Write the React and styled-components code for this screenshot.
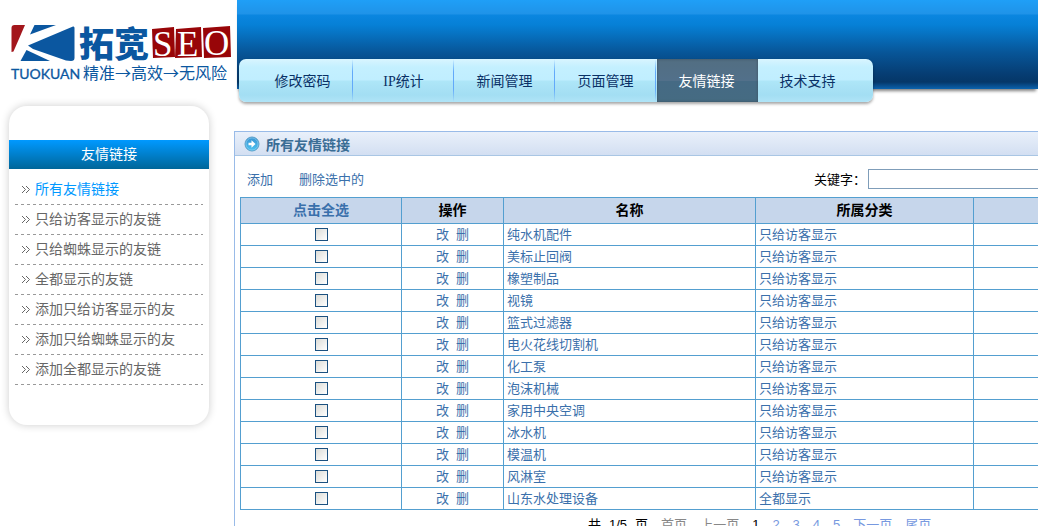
import React, { useState } from "react";
import styled, { createGlobalStyle, css } from "styled-components";

const navItems = ["修改密码", "IP统计", "新闻管理", "页面管理", "友情链接", "技术支持"];

const sideItems = [
  "所有友情链接",
  "只给访客显示的友链",
  "只给蜘蛛显示的友链",
  "全都显示的友链",
  "添加只给访客显示的友",
  "添加只给蜘蛛显示的友",
  "添加全都显示的友链",
];

const links = [
  { id: 1, name: "纯水机配件", type: "只给访客显示" },
  { id: 2, name: "美标止回阀", type: "只给访客显示" },
  { id: 3, name: "橡塑制品", type: "只给访客显示" },
  { id: 4, name: "视镜", type: "只给访客显示" },
  { id: 5, name: "篮式过滤器", type: "只给访客显示" },
  { id: 6, name: "电火花线切割机", type: "只给访客显示" },
  { id: 7, name: "化工泵", type: "只给访客显示" },
  { id: 8, name: "泡沫机械", type: "只给访客显示" },
  { id: 9, name: "家用中央空调", type: "只给访客显示" },
  { id: 10, name: "冰水机", type: "只给访客显示" },
  { id: 11, name: "模温机", type: "只给访客显示" },
  { id: 12, name: "风淋室", type: "只给访客显示" },
  { id: 13, name: "山东水处理设备", type: "全都显示" },
];

const Logo = () => (
  <LogoSvg viewBox="0 0 237 89" role="img" aria-label="拓宽SEO">
    <path d="M11.5 28 Q11.5 25 14.5 25 L25 25 L13.5 51.5 L11.5 52 Z" fill="#a3161c" />
    <path d="M34.5 25 H56 L45 29 L30 34.5 Z" fill="#0b57a0" />
    <path d="M28 45.5 L73 26.5 Q74.5 26 74.5 28 V58 Q74.5 61 71 61 L66 60.5 L33 49 Z" fill="#0b57a0" />
    <path d="M26.5 50 L50 61 H20.5 Z" fill="#0b57a0" />
    <text x="79" y="57" className="name">拓宽</text>
    <path d="M152 29 L174 27 L175 57 L153 58 Z" fill="#980508" />
    <path d="M176 29 L201 27 L202 57 L175 58 Z" fill="#980508" />
    <path d="M203 28 L230 26 L231 57 L204 58 Z" fill="#980508" />
    <text x="153" y="56" className="seo">S</text>
    <text x="177" y="56" className="seo">E</text>
    <text x="204" y="55" className="seo">O</text>
    <text x="11" y="79" className="latin">TUOKUAN</text>
    <text x="83" y="79" className="slogan">精准→高效→无风险</text>
  </LogoSvg>
);

const Chevrons = () => (
  <svg width="10" height="11" viewBox="0 0 10 11" fill="none" stroke="#666" aria-hidden="true">
    <path d="M1 1 L4.5 4.5 L1 8 M5 1 L8.5 4.5 L5 8" />
  </svg>
);

const ArrowBall = () => (
  <svg width="16" height="16" viewBox="0 0 16 16" aria-hidden="true">
    <defs>
      <linearGradient id="ball" x1="0" y1="0" x2="0" y2="1">
        <stop offset="0" stopColor="#3a92d2" />
        <stop offset="1" stopColor="#4cc4f2" />
      </linearGradient>
    </defs>
    <circle cx="8" cy="8" r="7" fill="url(#ball)" stroke="#5c9fc8" />
    <circle cx="8" cy="8" r="6" fill="none" stroke="#8fd0f0" strokeWidth="0.6" />
    <path d="M4.5 6.7 H7.5 V4.3 L11.5 8 L7.5 11.7 V9.3 H4.5 Z" fill="#fff" />
  </svg>
);

function App() {
  const [checked, setChecked] = useState([]);
  const [keyword, setKeyword] = useState("");

  const toggle = (id) => {
    setChecked(checked.includes(id) ? checked.filter((c) => c !== id) : [...checked, id]);
  };

  const toggleAll = (e) => {
    e.preventDefault();
    setChecked(checked.length === links.length ? [] : links.map((l) => l.id));
  };

  return (
    <Page>
      <GlobalStyle />
      <Header>
        <Logo />
        <Banner>
          <Nav>
            {navItems.map((item) => (
              <NavLink key={item} href="#" $active={item === "友情链接"}>
                {item}
              </NavLink>
            ))}
          </Nav>
        </Banner>
      </Header>
      <Body>
        <Sidebar>
          <SideTitle>友情链接</SideTitle>
          <SideList>
            {sideItems.map((item, i) => (
              <SideItem key={item}>
                <Chevrons />
                <SideLink href="#" $active={i === 0}>{item}</SideLink>
              </SideItem>
            ))}
          </SideList>
        </Sidebar>
        <Panel>
          <PanelTitle>
            <ArrowBall />
            所有友情链接
          </PanelTitle>
          <Toolbar>
            <a href="#">添加</a>
            <a href="#">删除选中的</a>
            <Search onSubmit={(e) => e.preventDefault()}>
              <label htmlFor="keyword">关键字：</label>
              <SearchInput id="keyword" type="text" value={keyword} onChange={(e) => setKeyword(e.target.value)} />
            </Search>
          </Toolbar>
          <Table>
            <colgroup>
              <col width="161" />
              <col width="102" />
              <col width="252" />
              <col width="218" />
              <col />
            </colgroup>
            <thead>
              <tr>
                <Th><a href="#" onClick={toggleAll}>点击全选</a></Th>
                <Th>操作</Th>
                <Th>名称</Th>
                <Th>所属分类</Th>
                <Th />
              </tr>
            </thead>
            <tbody>
              {links.map((link) => (
                <tr key={link.id}>
                  <Td $center>
                    <Checkbox
                      type="checkbox"
                      aria-label={link.name}
                      checked={checked.includes(link.id)}
                      onChange={() => toggle(link.id)}
                    />
                  </Td>
                  <Td $center>
                    <Actions>
                      <a href="#">改</a>
                      <a href="#">删</a>
                    </Actions>
                  </Td>
                  <Td><a href="#">{link.name}</a></Td>
                  <Td><a href="#">{link.type}</a></Td>
                  <Td />
                </tr>
              ))}
            </tbody>
          </Table>
          <Pager>
            <PageCount>
              <span>共</span>
              <span>1/5</span>
              <span>页</span>
            </PageCount>
            <Muted>首页</Muted>
            <Muted>上一页</Muted>
            <span>1</span>
            {["2", "3", "4", "5", "下一页", "尾页"].map((p) => (
              <a key={p} href="#">{p}</a>
            ))}
          </Pager>
        </Panel>
      </Body>
    </Page>
  );
}

const GlobalStyle = createGlobalStyle`
  * {
    box-sizing: border-box;
  }

  body {
    margin: 0;
    background: #fff;
    font: 13px "Liberation Serif", "Noto Sans CJK SC", sans-serif;
    color: #000;
  }

  a {
    color: #3a70ab;
    text-decoration: none;
  }
`;

const Page = styled.div`
  height: 100vh;
  overflow: hidden;
`;

const Header = styled.header`
  display: flex;
  height: 89px;
`;

const LogoSvg = styled.svg`
  flex: none;
  width: 237px;
  height: 89px;

  text {
    fill: #0b57a0;
    font-family: "Noto Sans CJK SC", sans-serif;
  }

  .name {
    font-size: 35px;
    font-weight: 900;
  }

  .seo {
    fill: #fff;
    font: 35px "Liberation Serif", serif;
  }

  .latin {
    font: 14px Lato, sans-serif;
    stroke: #0b57a0;
    stroke-width: 0.3px;
  }

  .slogan {
    font-size: 16px;
  }
`;

const Banner = styled.div`
  flex: 1;
  padding: 59px 0 0 2px;
  background: linear-gradient(
    #1f9ff7 0,
    #1f93e8 14px,
    #0a86e0 15px,
    #0680d6 25px,
    #075699 52px,
    #063d73 74px,
    #053768 82px,
    #0a5ca4 88px,
    #0b66b0 89px
  );
  box-shadow: 0 4px 3px -2px rgba(0, 0, 0, 0.5);
`;

const Nav = styled.nav`
  display: flex;
  width: fit-content;
  height: 43px;
  padding: 0 14px;
  border-radius: 7px;
  background: linear-gradient(#d9f5ff 0, #c4f0ff 8px, #c0eeff 21px, #aee6f8 22px, #a3def3 36px, #b0e4f7 43px);
  box-shadow: 0 2px 3px rgba(0, 0, 0, 0.35);
`;

const NavLink = styled.a`
  width: 101px;
  padding-right: 2px;
  color: #0a3166;
  font-size: 14px;
  line-height: 46px;
  text-align: center;
  background: linear-gradient(transparent, #62a9fa 30%, #62a9fa 70%, transparent) right 1px top / 1px 100% no-repeat;

  ${({ $active }) => $active && css`
    color: #fff;
    background: linear-gradient(#526e82, #52708a 50%, #456a84 51%, #456b82);
    box-shadow: inset 0 0 3px #3c4f5f;
  `}

  &:last-child {
    background: none;
  }
`;

const Body = styled.div`
  display: flex;
  align-items: flex-start;
`;

const Sidebar = styled.aside`
  flex: none;
  width: 200px;
  margin: 17px 25px 0 9px;
  padding: 34px 0 40px;
  border-radius: 18px;
  box-shadow: 0 0 8px rgba(0, 0, 0, 0.2);
`;

const SideTitle = styled.h2`
  margin: 0;
  color: #fff;
  font-size: 14px;
  font-weight: normal;
  line-height: 29px;
  text-align: center;
  background: linear-gradient(#0099ff, #006699);
`;

const SideList = styled.ul`
  margin: 0;
  padding: 6px 6px 0;
  list-style: none;
`;

const SideItem = styled.li`
  display: flex;
  align-items: center;
  gap: 4px;
  height: 30px;
  padding-left: 6px;
  background: repeating-linear-gradient(90deg, #999 0, #999 3px, transparent 3px, transparent 6px) bottom / 100% 1px no-repeat;
`;

const SideLink = styled.a`
  color: ${({ $active }) => ($active ? "#0099ff" : "#666")};
  font-size: 14px;
  line-height: 28px;
  white-space: nowrap;
`;

const Panel = styled.main`
  flex: 1;
  min-width: 0;
  margin-top: 42px;
  border: solid #99bbe8;
  border-width: 1px 0 0 1px;
`;

const PanelTitle = styled.h1`
  display: flex;
  align-items: center;
  gap: 6px;
  height: 24px;
  margin: 0;
  padding-left: 9px;
  border-bottom: 1px solid #a9c6e4;
  background: linear-gradient(#e9f0fa, #d3dff2);
  color: #3a6d95;
  font-size: 14px;
`;

const Toolbar = styled.div`
  display: flex;
  align-items: center;
  gap: 26px;
  height: 41px;
  padding: 4px 0 0 12px;
`;

const Search = styled.form`
  display: flex;
  align-items: center;
  gap: 2px;
  margin-left: auto;
`;

const SearchInput = styled.input`
  width: 170px;
  height: 20px;
  border: 1px solid #7f9db9;
  border-right: 0;
  background: #fff;
`;

const Table = styled.table`
  width: calc(100% - 4px);
  margin-left: 5px;
  table-layout: fixed;
  border-collapse: collapse;
`;

const Th = styled.th`
  height: 26px;
  padding: 0;
  border: 1px solid #539fd0;
  background: #c6d6eb;
  font-size: 14px;
  line-height: 20px;
`;

const Td = styled.td`
  height: 22px;
  padding: 0 3px;
  border: 1px solid #539fd0;
  line-height: 20px;
  text-align: ${({ $center }) => ($center ? "center" : "left")};
`;

const Actions = styled.span`
  display: flex;
  justify-content: center;
  gap: 7px;
`;

const Checkbox = styled.input`
  appearance: none;
  display: block;
  width: 13px;
  height: 13px;
  margin: 0 auto;
  border: 1px solid #1c5180;
  background: linear-gradient(135deg, #dcdcd7, #fff);

  &:checked {
    background: #1c5180;
    box-shadow: inset 0 0 0 2px #fff;
  }
`;

const Pager = styled.div`
  display: flex;
  gap: 13px;
  padding-left: 353px;
  font-family: "Liberation Sans", "Noto Sans CJK SC", sans-serif;
  line-height: 30px;
  white-space: nowrap;

  a {
    color: #7799e0;
  }
`;

const PageCount = styled.span`
  display: flex;
  gap: 8px;
`;

const Muted = styled.span`
  color: #888;
`;

export default App;
